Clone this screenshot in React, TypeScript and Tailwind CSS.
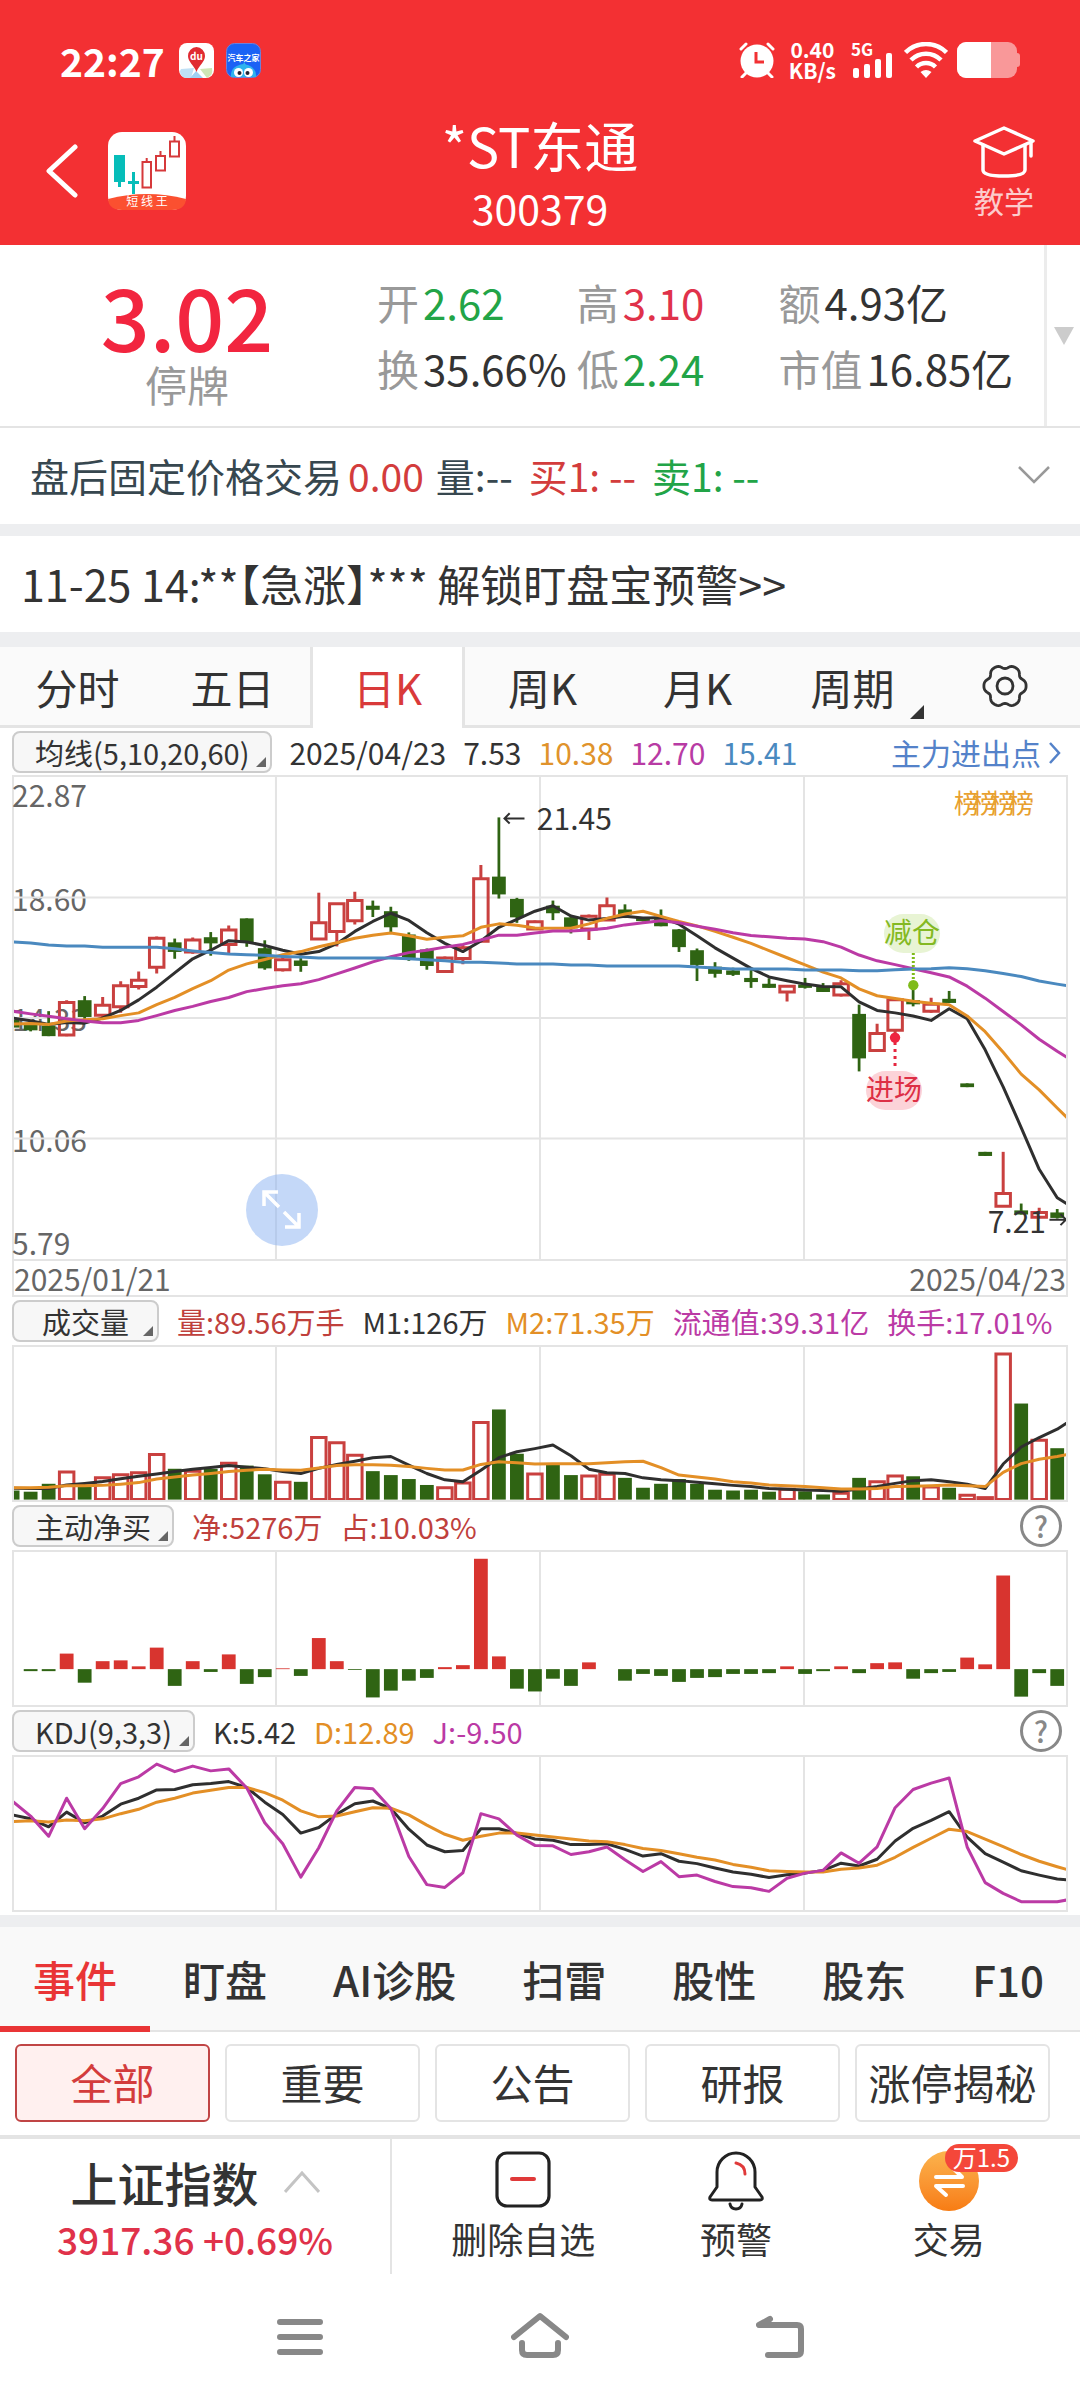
import React from 'react';
import clsx from 'clsx';

const RED = '#c9403f';
const GREEN = '#2f6413';
const BLACK = '#2f2f2f';
const ORANGE = '#e38f26';
const PURPLE = '#bb3aa5';
const BLUE = '#4a89bf';

// chart space: one candle every STEP units, first one on the left border
const X0 = 38;
const STEP = 52.25;
const cx = (i: number) => X0 + i * STEP;

// [up = 1 / down = 0, high, body top, body bottom, low]
const CANDLES: number[][] = [
  [0, 750, 755, 778, 778], [0, 765, 770, 786, 789], [0, 730, 772, 803, 803], [1, 698, 705, 800, 803],
  [0, 686, 698, 747, 755], [1, 689, 713, 742, 748], [1, 643, 656, 717, 735], [1, 614, 640, 658, 667],
  [1, 512, 517, 602, 620], [0, 518, 529, 557, 577], [1, 515, 522, 557, 562], [0, 499, 514, 532, 568],
  [1, 480, 493, 535, 560], [0, 459, 459, 529, 542], [0, 523, 546, 605, 609], [1, 570, 580, 609, 614],
  [0, 575, 582, 598, 615], [1, 384, 472, 519, 519], [1, 416, 416, 497, 541], [1, 381, 407, 466, 477],
  [0, 407, 422, 434, 455], [0, 425, 438, 485, 500], [0, 500, 506, 578, 583], [0, 547, 550, 598, 609],
  [1, 570, 575, 614, 616], [1, 535, 545, 576, 593], [1, 303, 343, 526, 529], [0, 164, 337, 389, 401],
  [0, 399, 402, 456, 472], [1, 465, 469, 490, 492], [0, 407, 422, 444, 464], [0, 452, 456, 488, 503],
  [1, 448, 453, 490, 522], [1, 398, 422, 464, 466], [0, 418, 433, 448, 458], [0, 455, 457, 467, 468],
  [0, 433, 460, 482, 482], [0, 490, 491, 543, 557], [0, 547, 552, 595, 642], [0, 587, 600, 621, 632],
  [0, 603, 611, 624, 627], [0, 610, 633, 645, 662], [0, 634, 650, 662, 662], [1, 656, 657, 674, 702],
  [0, 633, 652, 662, 664], [0, 648, 658, 674, 674], [1, 640, 650, 683, 687], [0, 711, 738, 868, 906],
  [1, 767, 795, 845, 846], [1, 697, 697, 786, 810], [0, 655, 698, 710, 716], [1, 691, 710, 730, 735],
  [0, 671, 694, 706, 706], [0, 941, 941, 952, 952], [0, 1141, 1141, 1153, 1153], [1, 1141, 1263, 1300, 1300],
  [0, 1292, 1312, 1324, 1324], [1, 1304, 1318, 1332, 1334], [0, 1308, 1318, 1334, 1336], [1, 1315, 1318, 1334, 1334],
];

const MA5 = [750, 758, 769, 763, 765, 750, 728, 697, 660, 618, 577, 552, 524, 528, 538, 552, 564, 556, 533, 497, 468, 444, 465, 501, 532, 556, 525, 485, 462, 438, 422, 452, 464, 459, 453, 458, 457, 476, 510, 545, 575, 605, 630, 641, 651, 658, 659, 703, 728, 735, 744, 757, 723, 752, 843, 951, 1070, 1192, 1275, 1308];
const MA10 = [768, 766, 769, 759, 755, 752, 743, 735, 711, 690, 664, 641, 610, 592, 579, 565, 556, 542, 530, 517, 508, 502, 510, 520, 514, 510, 485, 475, 479, 487, 488, 488, 475, 459, 446, 438, 453, 468, 481, 497, 514, 532, 553, 574, 595, 616, 633, 665, 685, 693, 701, 707, 711, 744, 790, 850, 914, 960, 1013, 1065];
const MA20 = [730, 738, 745, 752, 759, 764, 764, 757, 743, 728, 716, 702, 690, 673, 664, 656, 650, 638, 621, 604, 586, 571, 559, 552, 543, 535, 522, 508, 508, 502, 496, 496, 493, 488, 478, 472, 466, 472, 482, 491, 501, 509, 513, 517, 519, 527, 543, 566, 583, 594, 606, 618, 630, 657, 692, 731, 770, 812, 847, 880];
const MA60 = [528, 531, 537, 540, 540, 543, 543, 543, 543, 548, 554, 559, 563, 565, 567, 570, 572, 575, 575, 575, 575, 575, 577, 580, 583, 587, 587, 589, 592, 592, 592, 595, 595, 598, 598, 598, 598, 598, 601, 604, 607, 607, 607, 607, 610, 610, 610, 612, 612, 609, 607, 606, 603, 606, 612, 620, 629, 642, 651, 659];

const VOLUME = [497, 500, 480, 450, 487, 465, 457, 452, 406, 442, 448, 442, 428, 434, 456, 476, 475, 363, 376, 408, 448, 458, 468, 483, 490, 478, 325, 292, 404, 455, 432, 458, 460, 456, 465, 490, 480, 468, 480, 495, 497, 495, 500, 494, 499, 507, 504, 465, 475, 460, 461, 488, 490, 509, 515, 152, 277, 370, 390, 370];
const VOLUME_UP = [3, 5, 6, 7, 8, 10, 12, 15, 17, 18, 19, 24, 25, 26, 29, 32, 33, 43, 46, 48, 49, 51, 53, 54, 55, 57, 59];
const VOL_M1 = [491, 492, 492, 483, 479, 474, 467, 461, 455, 449, 443, 439, 434, 438, 442, 449, 454, 441, 431, 423, 414, 411, 433, 454, 470, 475, 446, 414, 399, 391, 382, 409, 443, 452, 454, 465, 470, 472, 476, 480, 484, 487, 492, 494, 496, 497, 499, 493, 487, 479, 472, 470, 475, 481, 492, 430, 387, 363, 342, 312];
const VOL_M2 = [490, 490, 489, 485, 485, 484, 481, 477, 468, 463, 458, 454, 449, 446, 443, 445, 446, 440, 434, 432, 432, 433, 436, 441, 445, 445, 431, 424, 427, 430, 429, 429, 429, 427, 424, 423, 439, 458, 463, 468, 475, 478, 483, 485, 487, 490, 493, 493, 492, 487, 486, 485, 483, 485, 487, 451, 429, 418, 411, 402];

const NET_ZERO = 931;
const NET = [931, 936, 936, 892, 965, 911, 909, 924, 877, 973, 911, 938, 894, 968, 951, 929, 948, 853, 911, 933, 1002, 985, 960, 953, 926, 921, 654, 899, 980, 987, 955, 973, 914, 931, 960, 943, 948, 963, 953, 951, 943, 943, 941, 924, 943, 936, 924, 941, 916, 914, 955, 941, 938, 902, 919, 696, 1000, 941, 973, 909];

const KDJ_K = [1284, 1294, 1314, 1277, 1304, 1287, 1257, 1242, 1221, 1220, 1208, 1205, 1200, 1215, 1252, 1283, 1330, 1316, 1282, 1256, 1249, 1268, 1320, 1360, 1377, 1374, 1319, 1319, 1331, 1345, 1348, 1359, 1359, 1357, 1371, 1388, 1382, 1401, 1407, 1418, 1428, 1434, 1442, 1435, 1431, 1424, 1406, 1413, 1396, 1350, 1318, 1298, 1276, 1340, 1382, 1403, 1425, 1436, 1446, 1450];
const KDJ_D = [1301, 1299, 1302, 1297, 1299, 1294, 1281, 1270, 1252, 1242, 1229, 1222, 1215, 1215, 1228, 1247, 1274, 1289, 1287, 1276, 1266, 1267, 1284, 1310, 1333, 1348, 1338, 1330, 1330, 1335, 1340, 1345, 1350, 1352, 1359, 1369, 1374, 1382, 1391, 1398, 1409, 1416, 1425, 1427, 1428, 1428, 1421, 1418, 1411, 1391, 1366, 1343, 1320, 1326, 1345, 1364, 1384, 1401, 1415, 1428];
const KDJ_J = [1250, 1287, 1338, 1242, 1319, 1268, 1205, 1188, 1156, 1175, 1161, 1173, 1168, 1216, 1304, 1357, 1441, 1367, 1274, 1215, 1218, 1268, 1389, 1460, 1467, 1430, 1281, 1294, 1335, 1361, 1362, 1384, 1377, 1365, 1397, 1427, 1402, 1440, 1436, 1452, 1465, 1468, 1477, 1444, 1431, 1424, 1380, 1406, 1365, 1266, 1220, 1204, 1191, 1365, 1455, 1482, 1503, 1503, 1503, 1495];

const Line: React.FC<{ data: number[]; color: string }> = ({ data, color }) => (
  <polyline
    points={data.map((y, i) => `${cx(i)},${y}`).join(' ')}
    fill="none"
    stroke={color}
    strokeWidth="3"
    strokeLinejoin="round"
    vectorEffect="non-scaling-stroke"
  />
);

const Plot: React.FC<{ viewBox: string; rows?: number; children: React.ReactNode; className: string }> = ({ viewBox, rows = 1, children, className }) => {
  const [, top, , height] = viewBox.split(' ').map(Number);
  const grid = { stroke: '#e4e4e4', strokeWidth: 2, vectorEffect: 'non-scaling-stroke' as const };
  return (
    <svg viewBox={viewBox} preserveAspectRatio="none" className={clsx('relative block w-full', className)}>
      {[1, 2, 3].map((n) => (
        <line key={n} x1={36 + n * 766} x2={36 + n * 766} y1={top} y2={top + height} {...grid} />
      ))}
      {Array.from({ length: rows - 1 }, (_, n) => (
        <line key={n} x1="36" x2="3100" y1={top + ((n + 1) * height) / rows} y2={top + ((n + 1) * height) / rows} {...grid} />
      ))}
      {children}
    </svg>
  );
};

const Dropdown: React.FC<{ children: React.ReactNode }> = ({ children }) => (
  <button className="relative h-[42px] min-w-[147px] shrink-0 rounded-[8px] border-2 border-[#cccccc] bg-[#f7f7f7] px-[21px] text-[29px] leading-[34px] text-[#333333]">
    {children}
    <svg viewBox="0 0 10 10" className="absolute right-[4px] bottom-[4px] h-[10px] w-[10px]">
      <path d="M10 0V10H0Z" fill="#666" />
    </svg>
  </button>
);

const Help: React.FC = () => (
  <button aria-label="帮助" className="mr-[6px] ml-auto flex h-[42px] w-[42px] shrink-0 items-center justify-center rounded-full border-3 border-[#888888] pb-[2px] text-[29px] leading-[34px] font-medium text-[#888888]">
    ?
  </button>
);

const PanelHead: React.FC<{ name: string; children: React.ReactNode }> = ({ name, children }) => (
  <div className="flex h-12 items-center gap-[18px] text-[29px] leading-[34px] whitespace-nowrap">
    <Dropdown>{name}</Dropdown>
    {children}
  </div>
);

const StatusBar: React.FC = () => (
  <div className="flex h-[84px] items-center pt-[36px] pr-[60px] pl-[60px]">
    <span className="text-[39px] leading-[42px] font-bold">22:27</span>
    <svg viewBox="0 0 35 35" className="ml-[14px] h-[35px] w-[35px]">
      <rect width="35" height="35" rx="8" fill="#fff" />
      <path d="M2 26 L15 25 L12 35 H7 Q1 34 1 28Z" fill="#bfe0f5" />
      <path d="M17 28 L24 35 H11Z" fill="#9fd0f3" />
      <path d="M21 26 L33 25 Q34 31 31 33 L28 35Z" fill="#cfe6b5" />
      <path d="M17.500 29 C15 22 9 19 9 13 A8.500 9 0 0 1 26 13 C26 19 20 22 17.500 29Z" fill="#e02b31" />
      <text x="17.500" y="17" textAnchor="middle" fontSize="10" fontWeight="700" fill="#fff">du</text>
    </svg>
    <svg viewBox="0 0 35 35" className="ml-[12px] h-[35px] w-[35px]">
      <rect x=".5" y=".5" width="34" height="34" rx="8" fill="#1b62f5" stroke="#6f7fd8" />
      <path d="M5 34 Q4 23 17.500 21 Q31 23 30 34Z" fill="#2fb3ee" />
      <path d="M17 22 L18 19 L20 22Z" fill="#2fb3ee" />
      <circle cx="12.500" cy="29.500" r="4.500" fill="#fff" />
      <circle cx="22.500" cy="29.500" r="4.500" fill="#fff" />
      <circle cx="13.500" cy="30" r="2" fill="#223" />
      <circle cx="21.500" cy="30" r="2" fill="#223" />
      <text x="17.500" y="17.500" textAnchor="middle" fontSize="8" fontWeight="700" fill="#fff">汽车之家</text>
    </svg>

    <svg viewBox="0 0 36 36" className="ml-auto h-[36px] w-[36px]" fill="none" stroke="#fff" strokeWidth="3" strokeLinecap="round">
      <circle cx="18" cy="19" r="16.500" fill="#fff" stroke="none" />
      <path d="M2 7 L7 2 M34 7 L29 2 M7 31 L3 35 M29 31 L33 35" />
      <path d="M17 10V20H25" stroke="#f23033" strokeLinecap="butt" />
    </svg>
    <div className="ml-[14px] flex flex-col items-center text-[21px] leading-[21px] font-bold">
      <span>0.40</span>
      <span>KB/s</span>
    </div>
    <svg viewBox="0 0 42 36" className="ml-[15px] h-[36px] w-[42px] overflow-visible" fill="#fff">
      <text x="0" y="14" fontSize="17" fontWeight="700">5G</text>
      <rect x="2" y="26" width="6" height="10" rx="2" />
      <rect x="13" y="22" width="6" height="14" rx="2" />
      <rect x="24" y="17" width="6" height="19" rx="2" />
      <rect x="35" y="11" width="6" height="25" rx="2" />
    </svg>
    <svg viewBox="0 0 44 36" className="ml-[11px] h-[36px] w-[44px]" fill="none" stroke="#fff" strokeWidth="4.500">
      <path d="M1.500 10.500 A29 29 0 0 1 42.500 10.500" />
      <path d="M7 18 A21 21 0 0 1 37 18" />
      <path d="M12.500 25 A13.500 13.500 0 0 1 31.500 25" />
      <path d="M16.500 30 Q22 26 27.500 30 L22 36Z" fill="#fff" stroke="none" />
    </svg>
    <div className="ml-[9px] flex h-[36px] w-[60px] overflow-hidden rounded-[9px] bg-white/50">
      <div className="w-[34px] bg-white" />
    </div>
    <div className="h-[14px] w-[3px] rounded-r-sm bg-white/50" />
  </div>
);

const AppLogo: React.FC = () => (
  <svg viewBox="0 0 78 78" className="h-[78px] w-[78px]">
    <rect width="78" height="78" rx="14" fill="#fff" />
    <path d="M0 67 Q39 57 78 67 Q77 78 64 78 H14 Q1 78 0 67Z" fill="#fb5030" />
    <path d="M6 23H17V50H13V55H10V50H6Z" fill="#06bdb9" />
    <path d="M25.500 40V62M20 50.500H31" stroke="#06bdb9" strokeWidth="3" />
    <g fill="none" stroke="#d6393b" strokeWidth="2">
      <path d="M34.500 30H43V55.500H34.500ZM38.700 30V26" />
      <path d="M48 24H57V38.500H48ZM52.500 24V19" />
      <path d="M62 9.500H71V24.500H62ZM66.500 9V4" />
    </g>
    <text x="39" y="74" textAnchor="middle" fontSize="12" fill="#fff">短 线 王</text>
  </svg>
);

const Header: React.FC = () => (
  <header className="bg-[#f33033] text-white">
    <StatusBar />
    <div className="grid grid-cols-[1fr_auto_1fr] pb-[7px]">
      <div className="flex items-start pt-[48px] pl-[45px]">
        <button aria-label="返回" className="mt-[12px] mr-[29px]">
          <svg viewBox="0 0 34 54" className="h-[54px] w-[34px]" fill="none" stroke="#fff" strokeWidth="5" strokeLinecap="round" strokeLinejoin="round">
            <path d="M30 3 L4 27 L30 51" />
          </svg>
        </button>
        <AppLogo />
      </div>
      <div className="flex flex-col items-center pt-[30px] leading-[62px]">
        <h1 className="text-[54px]">*ST东通</h1>
        <span className="text-[41px]">300379</span>
      </div>
      <div className="flex justify-end pt-[42px] pr-[45px]">
        <button className="flex flex-col items-center text-[30px] leading-[44px] text-white/75">
          <svg viewBox="0 0 62 52" className="h-[52px] w-[62px]" fill="none" stroke="#fff" strokeWidth="3.500" strokeLinejoin="round" strokeLinecap="round">
            <path d="M2 15 L31 2 L60 15 L31 28Z" />
            <path d="M10 19V44Q10 50 31 50Q52 50 52 44V19" />
            <path d="M58 16V30" />
          </svg>
          教学
        </button>
      </div>
    </div>
  </header>
);

const QUOTES = [
  { label: '开', value: '2.62', color: 'text-[#22a447]' },
  { label: '高', value: '3.10', color: 'text-[#e0324a]' },
  { label: '额', value: '4.93亿', color: 'text-[#333333]' },
  { label: '换', value: '35.66%', color: 'text-[#333333]' },
  { label: '低', value: '2.24', color: 'text-[#22a447]' },
  { label: '市值', value: '16.85亿', color: 'text-[#333333]' },
];

const QuotePanel: React.FC = () => (
  <section className="flex h-[183px] border-b-2 border-[#e4e4e4]">
    <div className="flex w-[374px] flex-col items-center pt-[24px]">
      <span className="text-[86px] leading-[92px] font-medium text-[#f2253f]">3.02</span>
      <span className="text-[42px] leading-[46px] text-[#999999]">停牌</span>
    </div>
    <dl className="grid flex-1 grid-cols-[200fr_202fr_266fr] content-start pt-[24px] pl-[3px] text-[42px] leading-[66px] whitespace-nowrap">
      {QUOTES.map((q) => (
        <div key={q.label} className="flex gap-[4px]">
          <dt className="text-[#999999]">{q.label}</dt>
          <dd className={q.color}>{q.value}</dd>
        </div>
      ))}
    </dl>
    <button aria-label="展开" className="flex w-[36px] items-center justify-center border-l-3 border-[#ececec]">
      <svg viewBox="0 0 20 18" className="h-[18px] w-[20px]">
        <path d="M0 0H20L10 18Z" fill="#ccc" />
      </svg>
    </button>
  </section>
);

// six-lobed cog outline around the origin
const COG = Array.from({ length: 96 }, (_, i) => {
  const a = (i / 96) * Math.PI * 2;
  const r = 19.6 + 1.9 * Math.cos(6 * a) - 0.4 * Math.cos(12 * a);
  return `${(r * Math.cos(a)).toFixed(2)},${(r * Math.sin(a)).toFixed(2)}`;
}).join(' ');

const PERIODS = ['分时', '五日', '日K', '周K', '月K', '周期'];

const PeriodTabs: React.FC = () => (
  <nav className="box-content grid h-[81px] grid-cols-[repeat(6,31fr)_30fr] border-t-[15px] border-[#edeef0] bg-[#fafafa] text-[42px] text-[#333333]">
    {PERIODS.map((p) => (
      <button
        key={p}
        className={clsx(
          'relative',
          p === '日K' ? 'border-x-3 border-[#e4e4e4] bg-white pb-[3px] text-[#d93a3a]' : 'border-b-3 border-[#e4e4e4]',
        )}
      >
        {p}
        {p === '周期' && (
          <svg viewBox="0 0 14 14" className="absolute right-[6px] bottom-[6px] h-[14px] w-[14px]">
            <path d="M14 0V14H0Z" fill="#333" />
          </svg>
        )}
      </button>
    ))}
    <button aria-label="设置" className="flex items-center justify-center border-b-3 border-[#e4e4e4]">
      <svg viewBox="-23 -23 46 46" className="h-[46px] w-[46px]" fill="none" stroke="#333" strokeWidth="2.800" strokeLinejoin="round">
        <polygon points={COG} />
        <circle r="8" />
      </svg>
    </button>
  </nav>
);

const PriceChart: React.FC = () => (
  <div className="relative border-2 border-[#e4e4e4] text-[30px] leading-[30px] text-[#666666]">
    <span className="absolute top-[2px] -left-[2px]">22.87</span>
    <span className="absolute top-1/4 -left-[2px] -translate-y-1/2">18.60</span>
    <span className="absolute top-1/2 -left-[2px] -translate-y-1/2">14.33</span>
    <span className="absolute top-3/4 -left-[2px] -translate-y-1/2">10.06</span>
    <span className="absolute bottom-[2px] -left-[2px]">5.79</span>
    <Plot viewBox="42 46 3052 1408" rows={4} className="h-[482px]">
      {CANDLES.map(([up, high, top, bottom, low], i) => {
        const x = cx(i);
        return up ? (
          <g key={i} fill="none" stroke={RED} strokeWidth="3">
            <path d={`M${x} ${high}V${top}M${x} ${bottom}V${low}`} vectorEffect="non-scaling-stroke" />
            <rect x={x - 21} y={top} width="42" height={bottom - top} vectorEffect="non-scaling-stroke" />
          </g>
        ) : (
          <g key={i} fill={GREEN}>
            <rect x={x - 4} y={high} width="8" height={low - high} />
            <rect x={x - 20} y={top} width="40" height={bottom - top} />
          </g>
        );
      })}
      <Line data={MA5} color={BLACK} />
      <Line data={MA10} color={ORANGE} />
      <Line data={MA20} color={PURPLE} />
      <Line data={MA60} color={BLUE} />

      <path d="M1523 167H1465M1480 152L1465 167L1480 182" fill="none" stroke={BLACK} strokeWidth="2" vectorEffect="non-scaling-stroke" />
      <path d="M3046 1339H3100M3078 1323L3094 1339L3078 1355" fill="none" stroke={BLACK} strokeWidth="2" vectorEffect="non-scaling-stroke" />
      <path d="M2651 560V640" stroke="#7fbb1a" strokeWidth="3" strokeDasharray="2 2" vectorEffect="non-scaling-stroke" />
      <circle cx="2651" cy="654" r="15" fill="#7fbb1a" />
      <path d="M2598 820V895" stroke="#e5263f" strokeWidth="3" strokeDasharray="3 4" vectorEffect="non-scaling-stroke" />
      <circle cx="2598" cy="807" r="15" fill="#ee2440" />
    </Plot>

    <span className="absolute top-[25px] left-[49.7%] text-[#333333]">21.45</span>
    <span className="absolute right-[20px] bottom-[24px] text-[#333333]">7.21</span>
    <div className="absolute top-[10px] right-[32px] flex text-[26px] text-[#e8a02f]">
      <span className="w-[18px]">榜</span>
      <span className="w-[18px]">榜</span>
      <span className="w-[18px]">榜</span>
      <span>榜</span>
    </div>
    <span className="absolute top-[28.5%] left-[82.7%] rounded-full bg-[#e8f4d4] pb-[4px] text-[28px] leading-[35px] text-[#84b922]">减仓</span>
    <span className="absolute top-[61%] left-[81%] rounded-full bg-[#fcd3d8] pb-[4px] text-[28px] leading-[35px] text-[#dd2f45]">进场</span>

    <button aria-label="全屏" className="absolute bottom-[13px] left-[22.1%] h-[72px] w-[72px] rounded-full bg-[#8ab2f2]/50">
      <svg viewBox="0 0 72 72" fill="none" stroke="#fff" strokeWidth="3.500">
        <path d="M33 33L18 18M18 32V18H32" />
        <path d="M38 38L53 53M53 39V53H39" />
      </svg>
    </button>
  </div>
);

const Charts: React.FC = () => (
  <section className="px-[12px] pb-[3px]">
    <div className="flex h-[47px] items-center gap-[17px] text-[30px] leading-[34px] whitespace-nowrap">
      <Dropdown>均线(5,10,20,60)</Dropdown>
      <span className="text-[#333333]">2025/04/23</span>
      <span className="text-[#333333]">7.53</span>
      <span className="text-[#e0932c]">10.38</span>
      <span className="text-[#b83ba4]">12.70</span>
      <span className="text-[#4a89bf]">15.41</span>
      <a href="#" className="mr-[7px] ml-auto flex items-center gap-[8px] text-[#5482c9]">
        主力进出点
        <svg viewBox="0 0 12 22" className="mt-[3px] h-[22px] w-[12px]" fill="none" stroke="currentColor" strokeWidth="2.500">
          <path d="M1 1L10 11L1 21" />
        </svg>
      </a>
    </div>
    <PriceChart />
    <div className="flex h-[36px] justify-between border-x-2 border-b-2 border-[#e4e4e4] text-[30px] leading-[34px] text-[#666666]">
      <span>2025/01/21</span>
      <span>2025/04/23</span>
    </div>

    <PanelHead name="成交量">
      <span className="text-[#bf403c]">量:89.56万手</span>
      <span className="text-[#333333]">M1:126万</span>
      <span className="text-[#e38f26]">M2:71.35万</span>
      <span className="text-[#bb3aa5]">流通值:39.31亿</span>
      <span className="text-[#bb3aa5]">换手:17.01%</span>
    </PanelHead>
    <div className="border-2 border-[#e4e4e4]">
      <Plot viewBox="42 134 3052 387" className="h-[153px]">
        {VOLUME.map((y, i) =>
          VOLUME_UP.includes(i) ? (
            <rect key={i} x={cx(i) - 21} y={y} width="42" height={520 - y} fill="none" stroke={RED} strokeWidth="3" vectorEffect="non-scaling-stroke" />
          ) : (
            <rect key={i} x={cx(i) - 20} y={y} width="40" height={520 - y} fill={GREEN} />
          ),
        )}
        <Line data={VOL_M1} color={BLACK} />
        <Line data={VOL_M2} color={ORANGE} />
      </Plot>
    </div>

    <PanelHead name="主动净买">
      <span className="text-[#bf403c]">净:5276万</span>
      <span className="text-[#bf403c]">占:10.03%</span>
      <Help />
    </PanelHead>
    <div className="border-2 border-[#e4e4e4]">
      <Plot viewBox="42 637 3052 384" className="h-[153px]">
        {NET.map((y, i) => (
          <rect
            key={i}
            x={cx(i) - 20}
            y={Math.min(y, NET_ZERO)}
            width="40"
            height={Math.abs(y - NET_ZERO)}
            fill={y < NET_ZERO ? '#d8342f' : GREEN}
          />
        ))}
      </Plot>
    </div>

    <PanelHead name="KDJ(9,3,3)">
      <span className="text-[#333333]">K:5.42</span>
      <span className="text-[#e38f26]">D:12.89</span>
      <span className="text-[#bb3aa5]">J:-9.50</span>
      <Help />
    </PanelHead>
    <div className="border-2 border-[#e4e4e4]">
      <Plot viewBox="42 1138 3052 386" className="h-[153px]">
        <Line data={KDJ_K} color={BLACK} />
        <Line data={KDJ_D} color={ORANGE} />
        <Line data={KDJ_J} color={PURPLE} />
      </Plot>
    </div>
  </section>
);

const SECTIONS = ['事件', '盯盘', 'AI诊股', '扫雷', '股性', '股东', 'F10'];
const FILTERS = ['全部', '重要', '公告', '研报', '涨停揭秘'];

const BottomBar: React.FC = () => (
  <div className="flex h-[139px] border-t-4 border-[#e4e4e4]">
    <button className="flex w-[392px] flex-col items-center border-r-2 border-[#e4e4e4] pt-[8px]">
      <span className="flex items-center gap-[25px] text-[47px] leading-[70px] font-medium text-[#333333]">
        上证指数
        <svg viewBox="0 0 36 22" className="h-[22px] w-[36px]" fill="none" stroke="#c4c4c4" strokeWidth="3">
          <path d="M1 21L18 2L35 21" />
        </svg>
      </span>
      <span className="text-[37px] leading-[44px] font-medium text-[#e0324a]">3917.36 +0.69%</span>
    </button>
    <div className="grid flex-1 grid-cols-3 px-[25px] pt-[12px] text-[36px] leading-[54px] text-[#333333]">
      <button className="flex flex-col items-center">
        <svg viewBox="0 0 56 60" className="h-[60px] w-[56px]" fill="none" strokeWidth="3.200" strokeLinecap="round">
          <rect x="2" y="2" width="52" height="53" rx="10" stroke="#222" />
          <path d="M17 28H39" stroke="#e03a3a" strokeWidth="4" />
        </svg>
        删除自选
      </button>
      <button className="flex flex-col items-center">
        <svg viewBox="0 0 56 60" className="h-[60px] w-[56px]" fill="none" stroke="#222" strokeWidth="3" strokeLinejoin="round" strokeLinecap="round">
          <path d="M9 36V21A19 19 0 0 1 47 21V36L54 46Q55 49 52 49H4Q1 49 2 46Z" />
          <path d="M22 53Q23 58 28 58Q33 58 34 53" />
          <path d="M28 12Q37 14 37 23" stroke="#e03a3a" />
        </svg>
        预警
      </button>
      <button className="flex flex-col items-center">
        <span className="relative h-[60px] w-[60px] rounded-full bg-linear-to-b from-[#fbb34c] to-[#f77c12]">
          <svg viewBox="0 0 60 60" fill="none" stroke="#fff" strokeWidth="4" strokeLinecap="round" strokeLinejoin="round">
            <path d="M17 26H43L34 17" />
            <path d="M44 35H17L27 44" />
          </svg>
          <span className="absolute top-[-7px] left-[26px] h-[28px] rounded-full bg-[#f4473a] px-[8px] text-[24px] leading-[26px] whitespace-nowrap text-white">万1.5</span>
        </span>
        交易
      </button>
    </div>
  </div>
);

const SystemNav: React.FC = () => (
  <nav className="flex flex-1 items-center justify-center gap-[180px] py-[38px]">
    <button aria-label="最近任务" className="flex w-[60px] justify-center">
      <svg viewBox="0 0 46 44" className="h-[44px] w-[46px]" stroke="#888" strokeWidth="6" strokeLinecap="round">
        <path d="M3 7H43M3 22H43M3 37H43" />
      </svg>
    </button>
    <button aria-label="主页" className="flex w-[60px] justify-center">
      <svg viewBox="0 0 58 50" className="h-[50px] w-[58px]" fill="none" stroke="#888" strokeWidth="6" strokeLinecap="round" strokeLinejoin="round">
        <path d="M3 25L29 4L55 25" />
        <path d="M11 31V38Q11 43 16 43H42Q47 43 47 38V31" />
      </svg>
    </button>
    <button aria-label="后退" className="flex w-[60px] justify-center">
      <svg viewBox="0 0 48 50" className="h-[50px] w-[48px]" fill="none" stroke="#888" strokeWidth="6" strokeLinecap="round" strokeLinejoin="round">
        <path d="M14 7L3 13H41Q45 13 45 17V39Q45 43 41 43H12" />
      </svg>
    </button>
  </nav>
);

export default function App() {
  return (
    <div className="flex min-h-screen w-full flex-col overflow-hidden bg-white font-['Noto_Sans_CJK_SC',sans-serif]">
      <Header />
      <QuotePanel />

      <section className="flex h-[96px] items-center pr-[30px] pb-[2px] pl-[30px] text-[39px] leading-[48px] whitespace-nowrap text-[#37474f]">
        <span>盘后固定价格交易</span>
        <span className="ml-[6px] text-[#d33c3c]">0.00</span>
        <span className="ml-[12px]">量:--</span>
        <span className="ml-4 text-[#d33c3c]">买1: --</span>
        <span className="ml-4 text-[#22a447]">卖1: --</span>
        <button aria-label="展开盘后交易" className="ml-auto">
          <svg viewBox="0 0 32 18" className="h-[18px] w-[32px]" fill="none" stroke="#999" strokeWidth="2.500">
            <path d="M1 1L16 16L31 1" />
          </svg>
        </button>
      </section>

      <a href="#" className="flex h-[108px] items-center border-t-[12px] border-[#edeef0] px-[21px] pb-[2px] text-[43px] whitespace-nowrap text-[#333333] [font-feature-settings:'halt']">
        11-25 14:**【急涨】*** 解锁盯盘宝预警&gt;&gt;
      </a>

      <PeriodTabs />
      <Charts />

      <nav className="flex h-[117px] border-t-[12px] border-b-2 border-t-[#edeef0] border-b-[#e4e4e4] bg-[#f9f9f9] text-[42px] font-medium whitespace-nowrap text-[#333333]">
        {SECTIONS.map((s, i) => (
          <button key={s} className={clsx('relative px-[33px]', i === 0 && 'text-[#e93536]')}>
            {s}
            {i === 0 && <span className="absolute inset-x-0 bottom-[-2px] h-[6px] bg-[#e93536]" />}
          </button>
        ))}
      </nav>

      <div className="flex gap-[15px] pt-[12px] pr-[30px] pb-[13px] pl-[15px] text-[42px] whitespace-nowrap">
        {FILTERS.map((f, i) => (
          <button
            key={f}
            className={clsx(
              'h-[78px] flex-1 basis-0 rounded-[6px] border-2 pb-[3px] leading-[70px]',
              i === 0 ? 'border-[#c04545] bg-[#fff0ef] text-[#d33c3c]' : 'border-[#e4e4e4] text-[#333333]',
            )}
          >
            {f}
          </button>
        ))}
      </div>

      <BottomBar />
      <SystemNav />
    </div>
  );
}
